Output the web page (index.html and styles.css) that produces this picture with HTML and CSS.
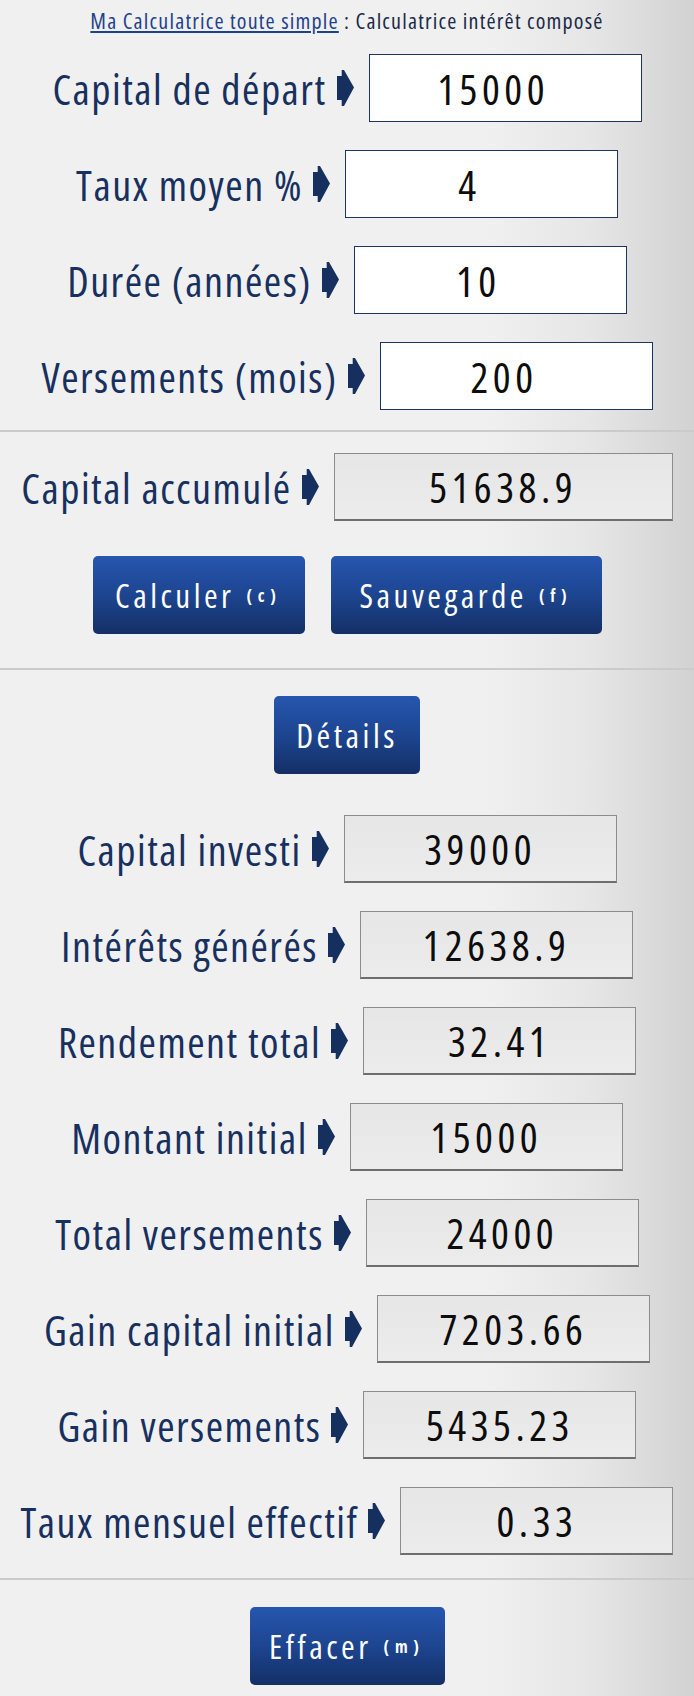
FILE: index.html
```html
<!DOCTYPE html>
<html lang="fr">
<head>
<meta charset="utf-8">
<title>Calculatrice intérêt composé</title>
<link rel="stylesheet" href="styles.css">
</head>
<body>
<div class="page">
  <p class="crumb"><a href="#">Ma Calculatrice toute simple</a> : Calculatrice intérêt composé</p>

  <div class="group group-top">
    <div class="row"><span class="label">Capital de départ</span><svg class="arrow" viewBox="0 0 17 36"><path d="M4.7 0H7L17 17.5L7 36H4.7V30H0V6H4.7Z"/></svg><div class="box input">15000</div></div>
    <div class="row"><span class="label">Taux moyen %</span><svg class="arrow" viewBox="0 0 17 36"><path d="M4.7 0H7L17 17.5L7 36H4.7V30H0V6H4.7Z"/></svg><div class="box input">4</div></div>
    <div class="row"><span class="label">Durée (années)</span><svg class="arrow" viewBox="0 0 17 36"><path d="M4.7 0H7L17 17.5L7 36H4.7V30H0V6H4.7Z"/></svg><div class="box input">10</div></div>
    <div class="row"><span class="label">Versements (mois)</span><svg class="arrow" viewBox="0 0 17 36"><path d="M4.7 0H7L17 17.5L7 36H4.7V30H0V6H4.7Z"/></svg><div class="box input">200</div></div>
  </div>

  <div class="sep sep-1"></div>

  <div class="row row-accum"><span class="label">Capital accumulé</span><svg class="arrow" viewBox="0 0 17 36"><path d="M4.7 0H7L17 17.5L7 36H4.7V30H0V6H4.7Z"/></svg><div class="box output wide">51638.9</div></div>

  <div class="actions">
    <button class="btn btn-calc">Calculer <span class="key">(c)</span></button>
    <button class="btn btn-save">Sauvegarde <span class="key">(f)</span></button>
  </div>

  <div class="sep sep-2"></div>

  <div class="actions actions-details">
    <button class="btn btn-details">Détails</button>
  </div>

  <div class="group group-details">
    <div class="row"><span class="label">Capital investi</span><svg class="arrow" viewBox="0 0 17 36"><path d="M4.7 0H7L17 17.5L7 36H4.7V30H0V6H4.7Z"/></svg><div class="box output">39000</div></div>
    <div class="row"><span class="label">Intérêts générés</span><svg class="arrow" viewBox="0 0 17 36"><path d="M4.7 0H7L17 17.5L7 36H4.7V30H0V6H4.7Z"/></svg><div class="box output">12638.9</div></div>
    <div class="row"><span class="label">Rendement total</span><svg class="arrow" viewBox="0 0 17 36"><path d="M4.7 0H7L17 17.5L7 36H4.7V30H0V6H4.7Z"/></svg><div class="box output">32.41</div></div>
    <div class="row"><span class="label">Montant initial</span><svg class="arrow" viewBox="0 0 17 36"><path d="M4.7 0H7L17 17.5L7 36H4.7V30H0V6H4.7Z"/></svg><div class="box output">15000</div></div>
    <div class="row"><span class="label">Total versements</span><svg class="arrow" viewBox="0 0 17 36"><path d="M4.7 0H7L17 17.5L7 36H4.7V30H0V6H4.7Z"/></svg><div class="box output">24000</div></div>
    <div class="row"><span class="label">Gain capital initial</span><svg class="arrow" viewBox="0 0 17 36"><path d="M4.7 0H7L17 17.5L7 36H4.7V30H0V6H4.7Z"/></svg><div class="box output">7203.66</div></div>
    <div class="row"><span class="label">Gain versements</span><svg class="arrow" viewBox="0 0 17 36"><path d="M4.7 0H7L17 17.5L7 36H4.7V30H0V6H4.7Z"/></svg><div class="box output">5435.23</div></div>
    <div class="row"><span class="label">Taux mensuel effectif</span><svg class="arrow" viewBox="0 0 17 36"><path d="M4.7 0H7L17 17.5L7 36H4.7V30H0V6H4.7Z"/></svg><div class="box output">0.33</div></div>
  </div>

  <div class="sep sep-3"></div>

  <div class="actions actions-clear">
    <button class="btn btn-clear">Effacer <span class="key">(m)</span></button>
  </div>
</div>
</body>
</html>
```

FILE: styles.css
```css
html, body {
  margin: 0;
  padding: 0;
}

body {
  background: linear-gradient(to right, #f0f0f0 0%, #f0f0f0 70%, #e6e6e6 85%, #d2d2d2 100%);
  font-family: "Open Sans", "DejaVu Sans Condensed", sans-serif;
  font-stretch: 75%;
  color: #17305f;
  min-height: 1696px;
}

.page {
  padding-top: 8px;
}

.crumb {
  margin: 0;
  height: 24px;
  line-height: 24px;
  font-size: 22px;
  letter-spacing: 1.2px;
  text-align: center;
  color: #1b2a48;
}

.crumb a {
  color: #1f428c;
  text-decoration: underline;
}

.group {
  display: flex;
  flex-direction: column;
  gap: 28px;
}

.group-top {
  margin-top: 22px;
}

.row {
  display: flex;
  justify-content: center;
  align-items: center;
  height: 68px;
}

.label {
  font-size: 42px;
  letter-spacing: 1.5px;
  color: #17305f;
  white-space: nowrap;
}

.arrow {
  width: 17px;
  height: 36px;
  margin-left: 10px;
  margin-right: 15px;
  fill: #15305f;
  flex: none;
}

.box {
  box-sizing: border-box;
  width: 273px;
  height: 68px;
  display: flex;
  align-items: center;
  justify-content: center;
  font-size: 42px;
  letter-spacing: 4.5px;
  color: #0d0d0d;
  flex: none;
}

.input {
  background: #ffffff;
  border: 1px solid #1b3564;
  padding-right: 24px;
}

.output {
  background: linear-gradient(to bottom, #e6e6e6, #ececec);
  border: 1px solid #8c8c8c;
  border-bottom: 2px solid #6e6e6e;
}

.wide {
  width: 339px;
}

.sep {
  height: 2px;
  background: #cbcbcb;
}

.sep-1 {
  margin-top: 20px;
}

.row-accum {
  margin-top: 21px;
}

.actions {
  display: flex;
  justify-content: center;
  gap: 26px;
  margin-top: 35px;
}

.btn {
  box-sizing: border-box;
  height: 78px;
  border: none;
  border-radius: 5px;
  background: linear-gradient(to bottom, #2656ae 0%, #1d4590 50%, #142f66 100%);
  color: #ffffff;
  font-family: "Open Sans", "DejaVu Sans Condensed", sans-serif;
  font-stretch: 75%;
  font-size: 33px;
  letter-spacing: 3.5px;
  padding: 0;
  display: flex;
  align-items: center;
  justify-content: center;
  gap: 12px;
}

.key {
  font-size: 17px;
  font-weight: bold;
  letter-spacing: 6px;
}

.btn-calc {
  width: 212px;
}

.btn-save {
  width: 271px;
}

.sep-2 {
  margin-top: 34px;
}

.actions-details {
  margin-top: 26px;
}

.btn-details {
  width: 146px;
}

.group-details {
  margin-top: 41px;
}

.sep-3 {
  margin-top: 23px;
}

.actions-clear {
  margin-top: 27px;
}

.btn-clear {
  width: 195px;
}
```
